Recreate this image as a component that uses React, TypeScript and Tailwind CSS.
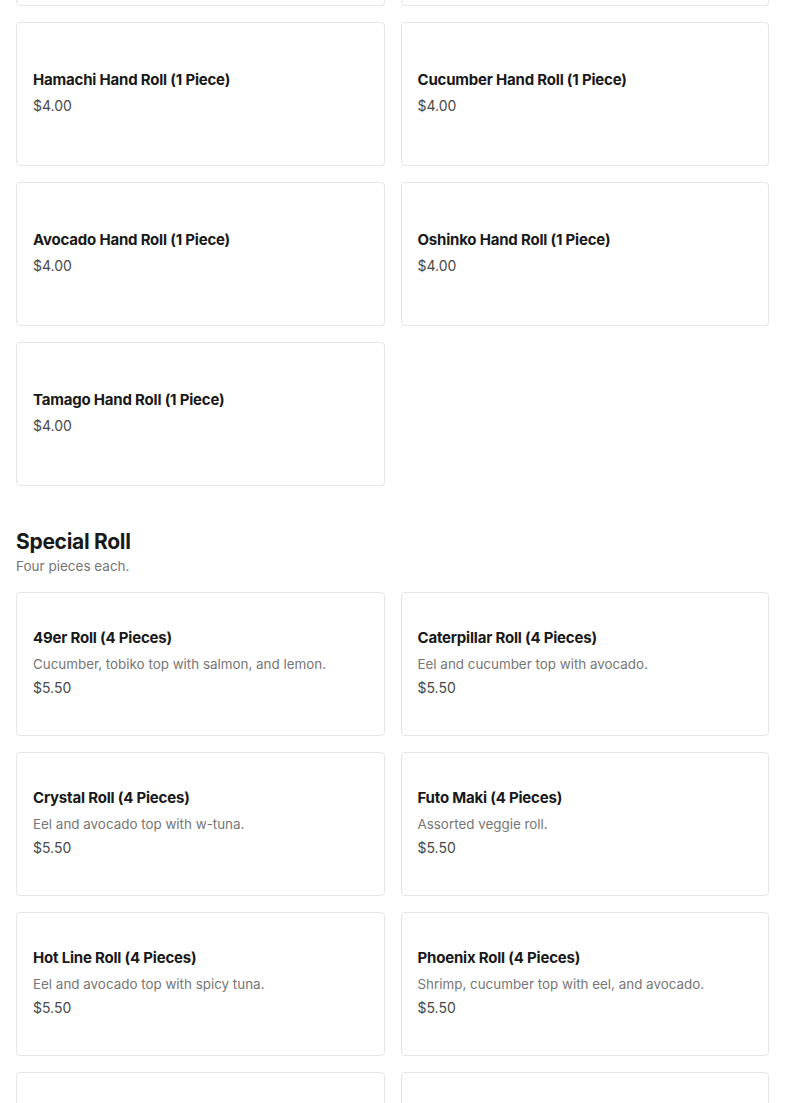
type Item = { name: string; desc?: string; price: string };

const handRolls: Item[] = [
  { name: "Salmon Hand Roll (1 Piece)", price: "$4.00" },
  { name: "Tuna Hand Roll (1 Piece)", price: "$4.00" },
  { name: "Hamachi Hand Roll (1 Piece)", price: "$4.00" },
  { name: "Cucumber Hand Roll (1 Piece)", price: "$4.00" },
  { name: "Avocado Hand Roll (1 Piece)", price: "$4.00" },
  { name: "Oshinko Hand Roll (1 Piece)", price: "$4.00" },
  { name: "Tamago Hand Roll (1 Piece)", price: "$4.00" },
];

const specialRolls: Item[] = [
  { name: "49er Roll (4 Pieces)", desc: "Cucumber, tobiko top with salmon, and lemon.", price: "$5.50" },
  { name: "Caterpillar Roll (4 Pieces)", desc: "Eel and cucumber top with avocado.", price: "$5.50" },
  { name: "Crystal Roll (4 Pieces)", desc: "Eel and avocado top with w-tuna.", price: "$5.50" },
  { name: "Futo Maki (4 Pieces)", desc: "Assorted veggie roll.", price: "$5.50" },
  { name: "Hot Line Roll (4 Pieces)", desc: "Eel and avocado top with spicy tuna.", price: "$5.50" },
  { name: "Phoenix Roll (4 Pieces)", desc: "Shrimp, cucumber top with eel, and avocado.", price: "$5.50" },
  { name: "Rainbow Roll (4 Pieces)", desc: "California roll top with assorted fish.", price: "$5.50" },
  { name: "Spider Roll (4 Pieces)", desc: "Soft shell crab, cucumber and avocado.", price: "$5.50" },
];

function Card({ item }: { item: Item }) {
  return (
    <div className="h-[144px] flex flex-col justify-center px-4 pb-[2px] border border-[#e6e6e6] rounded-[4px] bg-white">
      <h3 className="text-[15px] leading-[24px] font-bold text-[#191919] tracking-[-0.2px] mb-[2px]">{item.name}</h3>
      {item.desc && (
        <p className="text-[13.4px] leading-[24px] text-[#767676]">{item.desc}</p>
      )}
      <p className="text-[14px] leading-[24px] text-[#494949]">{item.price}</p>
    </div>
  );
}

export default function App() {
  return (
    <div className="bg-white min-h-screen overflow-hidden" style={{ fontFamily: "Inter, 'Liberation Sans', sans-serif" }}>
      <div className="px-4 -mt-[138px]">
        {/* Hand Roll (scrolled past the heading) */}
        <div className="grid grid-cols-2 gap-4">
          {handRolls.map((it, i) => (
            <Card key={i} item={it} />
          ))}
        </div>

        {/* Special Roll */}
        <section className="mt-[42px]">
          <h2 className="text-[21px] leading-[28px] font-bold text-[#191919] tracking-[-0.3px]">Special Roll</h2>
          <p className="text-[13.5px] leading-[20px] text-[#767676]">Four pieces each.</p>
          <div className="grid grid-cols-2 gap-4 mt-4">
            {specialRolls.map((it, i) => (
              <Card key={i} item={it} />
            ))}
          </div>
        </section>
      </div>
    </div>
  );
}
